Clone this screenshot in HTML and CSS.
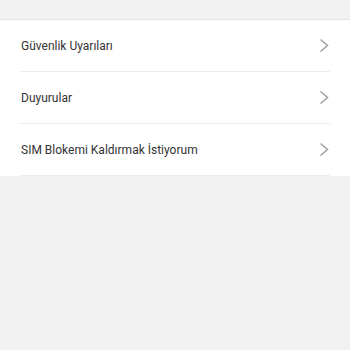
FILE: index.html
```html
<!DOCTYPE html>
<html lang="tr">
<head>
	<meta charset="UTF-8">
	<title>Yardım</title>
	<link rel="stylesheet" href="styles.css">
</head>
<body>
	<div class="top-gap"></div>
	<ul class="menu-list">
		<li class="menu-item">
			<span class="menu-text">Güvenlik Uyarıları</span>
			<svg class="chevron" width="10" height="15" viewBox="0 0 10 15"><path d="M1.5 1.5 L8.5 7.5 L1.5 13.5" fill="none" stroke="#a0a0a0" stroke-width="1.5"/></svg>
		</li>
		<li class="menu-item">
			<span class="menu-text">Duyurular</span>
			<svg class="chevron" width="10" height="15" viewBox="0 0 10 15"><path d="M1.5 1.5 L8.5 7.5 L1.5 13.5" fill="none" stroke="#a0a0a0" stroke-width="1.5"/></svg>
		</li>
		<li class="menu-item">
			<span class="menu-text">SIM Blokemi Kaldırmak İstiyorum</span>
			<svg class="chevron" width="10" height="15" viewBox="0 0 10 15"><path d="M1.5 1.5 L8.5 7.5 L1.5 13.5" fill="none" stroke="#a0a0a0" stroke-width="1.5"/></svg>
		</li>
	</ul>
</body>
</html>
```

FILE: styles.css
```css
* {
	margin: 0;
	padding: 0;
}
body {
	background-color: #f2f2f2;
	font-family: Roboto, "Noto Sans", sans-serif;
}

.top-gap {
	height: 19px;
	border-bottom: 1px solid #e4e4e4;
}

.menu-list {
	list-style: none;
	background-color: #fff;
	padding: 0 20px;
}

.menu-item {
	display: flex;
	align-items: center;
	justify-content: space-between;
	height: 51px;
	border-bottom: 1px solid #ececec;
	color: #333;
	font-size: 12px;
}

.menu-text {
	padding-left: 1px;
	padding-top: 1px;
}

.chevron {
	margin-right: 1px;
}
```
